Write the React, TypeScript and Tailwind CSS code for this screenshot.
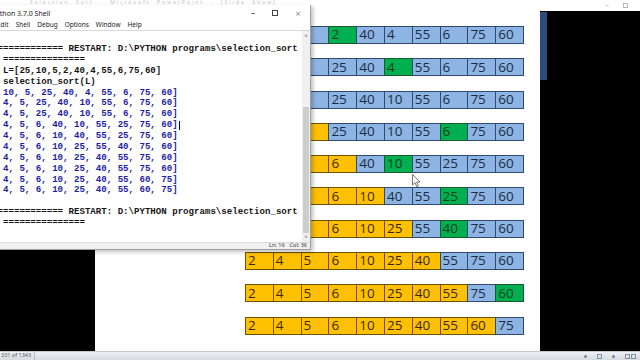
import React from "react";

type C = "b" | "y" | "g";
const cellCls: Record<C, string> = {
  b: "bg-[#8db4e2] border-[#2c4a74] text-[#1a2c48]",
  y: "bg-[#ffc000] border-[#6e5200] text-[#3a2900]",
  g: "bg-[#00b050] border-[#1c5a2c] text-[#123d1c]",
};

const rows: { v: number[]; c: C[] }[] = [
  { v: [25, 10, 5, 2, 40, 4, 55, 6, 75, 60], c: ["b", "b", "b", "g", "b", "b", "b", "b", "b", "b"] },
  { v: [2, 10, 5, 25, 40, 4, 55, 6, 75, 60], c: ["y", "b", "b", "b", "b", "g", "b", "b", "b", "b"] },
  { v: [2, 4, 5, 25, 40, 10, 55, 6, 75, 60], c: ["y", "y", "b", "b", "b", "b", "b", "b", "b", "b"] },
  { v: [2, 4, 5, 25, 40, 10, 55, 6, 75, 60], c: ["y", "y", "y", "b", "b", "b", "b", "g", "b", "b"] },
  { v: [2, 4, 5, 6, 40, 10, 55, 25, 75, 60], c: ["y", "y", "y", "y", "b", "g", "b", "b", "b", "b"] },
  { v: [2, 4, 5, 6, 10, 40, 55, 25, 75, 60], c: ["y", "y", "y", "y", "y", "b", "b", "g", "b", "b"] },
  { v: [2, 4, 5, 6, 10, 25, 55, 40, 75, 60], c: ["y", "y", "y", "y", "y", "y", "b", "g", "b", "b"] },
  { v: [2, 4, 5, 6, 10, 25, 40, 55, 75, 60], c: ["y", "y", "y", "y", "y", "y", "y", "b", "b", "b"] },
  { v: [2, 4, 5, 6, 10, 25, 40, 55, 75, 60], c: ["y", "y", "y", "y", "y", "y", "y", "y", "b", "g"] },
  { v: [2, 4, 5, 6, 10, 25, 40, 55, 60, 75], c: ["y", "y", "y", "y", "y", "y", "y", "y", "y", "b"] },
];

const BLACK = "text-[#161616]";
const BLUE = "text-[#1e1ea6]";
const shellLines: { t: string; c: string; caret?: boolean }[] = [
  { t: "=============== RESTART: D:\\PYTHON programs\\selection_sort.py ===============", c: BLACK },
  { t: "    ===============", c: BLACK },
  { t: ">>> L=[25,10,5,2,40,4,55,6,75,60]", c: BLACK },
  { t: ">>> selection_sort(L)", c: BLACK },
  { t: "[2, 10, 5, 25, 40, 4, 55, 6, 75, 60]", c: BLUE },
  { t: "[2, 4, 5, 25, 40, 10, 55, 6, 75, 60]", c: BLUE },
  { t: "[2, 4, 5, 25, 40, 10, 55, 6, 75, 60]", c: BLUE },
  { t: "[2, 4, 5, 6, 40, 10, 55, 25, 75, 60]", c: BLUE, caret: true },
  { t: "[2, 4, 5, 6, 10, 40, 55, 25, 75, 60]", c: BLUE },
  { t: "[2, 4, 5, 6, 10, 25, 55, 40, 75, 60]", c: BLUE },
  { t: "[2, 4, 5, 6, 10, 25, 40, 55, 75, 60]", c: BLUE },
  { t: "[2, 4, 5, 6, 10, 25, 40, 55, 75, 60]", c: BLUE },
  { t: "[2, 4, 5, 6, 10, 25, 40, 55, 60, 75]", c: BLUE },
  { t: "[2, 4, 5, 6, 10, 25, 40, 55, 60, 75]", c: BLUE },
  { t: " ", c: BLACK },
  { t: "=============== RESTART: D:\\PYTHON programs\\selection_sort.py ===============", c: BLACK },
  { t: "    ===============", c: BLACK },
];

function ArrayRow({ v, c }: { v: number[]; c: C[] }) {
  return (
    <div className="flex h-[18px]">
      {v.map((n, i) => (
        <div
          key={i}
          className={`w-[28.8px] h-[18px] border flex items-center pl-[2px] text-[13.5px] leading-none ${i > 0 ? "-ml-px" : ""} ${cellCls[c[i]]}`}
        >
          {n}
        </div>
      ))}
    </div>
  );
}

export default function App() {
  return (
    <div className="w-[640px] h-[360px] relative overflow-hidden bg-white flex flex-col font-['Open_Sans',sans-serif]">
      {/* top strip */}
      <div className="h-[11px] bg-white flex items-start relative">
        <div className="w-[300px] overflow-hidden pl-[30px] text-[5px] leading-[5px] text-[#c4c4c4] tracking-[2px] whitespace-pre font-['Noto_Sans',sans-serif]">
          Selection  Sort  -  Microsoft  PowerPoint  -  [Slide  Show]
        </div>
        <div className="ml-auto flex items-center gap-[14px] pr-[12px] pt-[1px] text-[7px] leading-[8px] text-[#b0b0b0]">
          <span>–</span>
          <span className="w-[5px] h-[5px] border border-[#b8b8b8]"></span>
        </div>
      </div>

      {/* middle */}
      <div className="flex h-[340px]">
        <div className="w-[95px] bg-black" />
        <div className="w-[445px] bg-white pt-[15px] pl-[150px] flex flex-col gap-[14.3px]">
          {rows.map((r, i) => (
            <ArrayRow key={i} v={r.v} c={r.c} />
          ))}
        </div>
        <div className="flex-1 bg-black pt-px">
          <div className="w-[7px] h-[68px] bg-[#2b4c7c]" />
        </div>
      </div>

      {/* bottom status */}
      <div className="h-[9px] bg-gradient-to-b from-[#eef0f3] to-[#d6dbe1] border-t border-[#c4c9cf] flex items-center text-[5.5px] leading-none text-[#555] font-['Noto_Sans',sans-serif]">
        <div className="w-[35px] pl-px border-r border-[#b9bec4] h-full flex items-center">331 of 1343</div>
        <div className="ml-auto flex items-center gap-[10px] pr-[4px] text-[#6b7c95]">
          <span className="w-[3px] h-[3px] bg-[#6d84a8] rounded-full"></span>
          <span className="w-[5px] h-[5px] border border-[#8393aa]"></span>
          <span className="w-[3px] h-[3px] bg-[#6d84a8] rounded-full"></span>
          <div className="flex gap-px">
            <span className="w-[5px] h-[5px] border border-[#8393aa]"></span>
            <span className="w-[5px] h-[5px] border border-[#8393aa]"></span>
          </div>
        </div>
      </div>

      {/* IDLE window */}
      <div className="absolute left-0 top-[5px] w-[311px] h-[245px] bg-white border-r border-b border-[#a0a0a0] shadow-[2px_2px_4px_rgba(0,0,0,0.25)] flex flex-col overflow-hidden">
        <div className="h-[16px] flex items-center text-[7px] leading-none text-[#222] font-['Noto_Sans',sans-serif]">
          <span className="-ml-[8px] whitespace-pre">Python 3.7.0 Shell</span>
          <div className="ml-auto flex items-center text-[#333]">
            <span className="w-[22px] text-center text-[8px]">–</span>
            <span className="w-[22px] flex justify-center">
              <span className="w-[6px] h-[6px] border border-[#444]"></span>
            </span>
            <span className="w-[24px] text-center text-[9px] font-light">×</span>
          </div>
        </div>
        <div className="h-[10px] flex items-center gap-[7px] text-[6.5px] leading-none text-[#222] border-b border-[#d8d8d8] font-['Noto_Sans',sans-serif]">
          <span className="-ml-[3px]">Edit</span>
          <span>Shell</span>
          <span>Debug</span>
          <span>Options</span>
          <span>Window</span>
          <span>Help</span>
        </div>
        <div className="flex-1 flex min-h-0">
          <div className="flex-1 overflow-hidden mr-[3px] pt-[13px] font-['Liberation_Mono',monospace] font-bold text-[9.1px] leading-[10.875px]">
            <div className="-ml-[18.8px]">
              {shellLines.map((l, i) => (
                <div key={i} className={`whitespace-pre h-[10.875px] flex items-center ${l.c}`}>
                  {l.t}
                  {l.caret && <span className="inline-block w-px h-[9px] bg-black ml-px" />}
                </div>
              ))}
            </div>
          </div>
          <div className="w-[8px] bg-[#f0f0f0] flex flex-col items-center text-[6px] leading-none text-[#555]">
            <span className="h-[8px] flex items-center mt-[1px]">˄</span>
            <div className="h-[67px]" />
            <div className="w-[6px] h-[126px] bg-[#cdcdcd]" />
            <span className="h-[8px] flex items-center">˅</span>
          </div>
        </div>
        <div className="h-[7px] bg-[#f0f0f0] border-t border-[#dcdcdc] flex items-center justify-end gap-[5px] pr-[3px] text-[5.5px] leading-none text-[#333] font-['Noto_Sans',sans-serif]">
          <span>Ln: 16</span>
          <span>Col: 36</span>
        </div>
      </div>

      {/* mouse pointer */}
      <svg className="absolute left-[412px] top-[174px]" width="9" height="14" viewBox="0 0 9 14">
        <path d="M0.5 0.5 L0.5 11 L3 8.6 L4.8 12.8 L6.4 12.1 L4.7 8 L8 8 Z" fill="#ffffff" stroke="#555" strokeWidth="0.8" />
      </svg>
    </div>
  );
}
